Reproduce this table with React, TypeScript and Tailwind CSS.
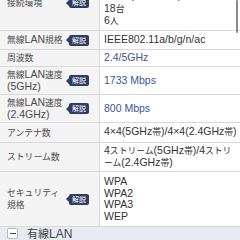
import React from 'react';

type Row = {
  label: string[];
  values: string[];
  h: string;
  badge?: boolean;
  accent?: boolean;
};

const rows: Row[] = [
  { label: ['接続環境'], values: ['3階建て(戸建て)', '4LDK(マンション)', '18台', '6人'], h: 'h-[56px]', badge: true },
  { label: ['無線LAN規格'], values: ['IEEE802.11a/b/g/n/ac'], h: 'h-[19px]', badge: true },
  { label: ['周波数'], values: ['2.4/5GHz'], h: 'h-[17px]', accent: true },
  { label: ['無線LAN速度', '(5GHz)'], values: ['1733 Mbps'], h: 'h-[28px]', badge: true, accent: true },
  { label: ['無線LAN速度', '(2.4GHz)'], values: ['800 Mbps'], h: 'h-[28px]', badge: true, accent: true },
  { label: ['アンテナ数'], values: ['4×4(5GHz帯)/4×4(2.4GHz帯)'], h: 'h-[20px]' },
  { label: ['ストリーム数'], values: ['4ストリーム(5GHz帯)/4ストリ', 'ーム(2.4GHz帯)'], h: 'h-[29px]' },
  { label: ['セキュリティ', '規格'], values: ['WPA', 'WPA2', 'WPA3', 'WEP'], h: 'h-[55px]', badge: true },
];

// kana/kanji runs are set a little smaller than the latin text
const Mixed = ({ text, cjk = 'text-[8.8px]' }: { text: string; cjk?: string }) => (
  <>
    {text.split(/([\u3000-\u9fff\uff00-\uffef]+)/).map((part, i) =>
      /[\u3000-\u9fff\uff00-\uffef]/.test(part) ? (
        <span key={i} className={cjk}>
          {part}
        </span>
      ) : (
        <React.Fragment key={i}>{part}</React.Fragment>
      )
    )}
  </>
);

const Badge = () => (
  <span className="relative flex h-[11px] w-[20px] shrink-0 items-center justify-center rounded-[2px] bg-[#2e3b63] text-[7px] leading-none text-white">
    <span className="absolute -left-[3px] top-1/2 -translate-y-1/2 border-y-[3px] border-r-[3px] border-y-transparent border-r-[#2e3b63]" />
    解説
  </span>
);

export default function App() {
  return (
    <div
      className="relative h-[240px] w-[240px] overflow-hidden bg-white"
      style={{ fontFamily: '"Liberation Sans", "Noto Sans CJK JP", sans-serif' }}
    >
      <div className="-mt-[25px] flex flex-col">
        {rows.map((r, i) => (
          <div key={i} className={`flex border-b border-[#d9d9d9] ${r.h}`}>
            <div className="flex w-[100px] shrink-0 items-center justify-between border-r border-[#d9d9d9] bg-[#f4f4f4] pl-[7px] pr-[10px] text-[10.5px] leading-[11px] text-[#4a4a4a]">
              <div className="flex flex-col">
                {r.label.map((l) => (
                  <span key={l} className="whitespace-nowrap">
                    <Mixed text={l} />
                  </span>
                ))}
              </div>
              {r.badge && <Badge />}
            </div>
            <div
              className={`flex flex-1 flex-col justify-center pl-[4px] text-[10.5px] leading-[11.5px] ${
                r.accent ? 'text-[#3a5894]' : 'text-[#333]'
              }`}
            >
              {r.values.map((v) => (
                <span key={v} className="whitespace-nowrap">
                  <Mixed text={v} />
                </span>
              ))}
            </div>
          </div>
        ))}
        <div className="flex h-[20px] items-start gap-[9px] bg-[#e8ebf2] px-[7px] pt-[1px]">
          <span className="flex h-[11px] w-[11px] items-center justify-center rounded-[2px] border border-[#b4b9c4] bg-white">
            <span className="h-[1.5px] w-[6px] bg-[#444]" />
          </span>
          <span className="text-[12px] leading-[12px] text-[#444]">
            <Mixed text="有線LAN" cjk="text-[11px]" />
          </span>
        </div>
      </div>
      {/* scroll indicator */}
      <div className="absolute right-[2px] top-0 h-[33px] w-[2px] rounded-full bg-[#8a8a8a]" />
    </div>
  );
}
